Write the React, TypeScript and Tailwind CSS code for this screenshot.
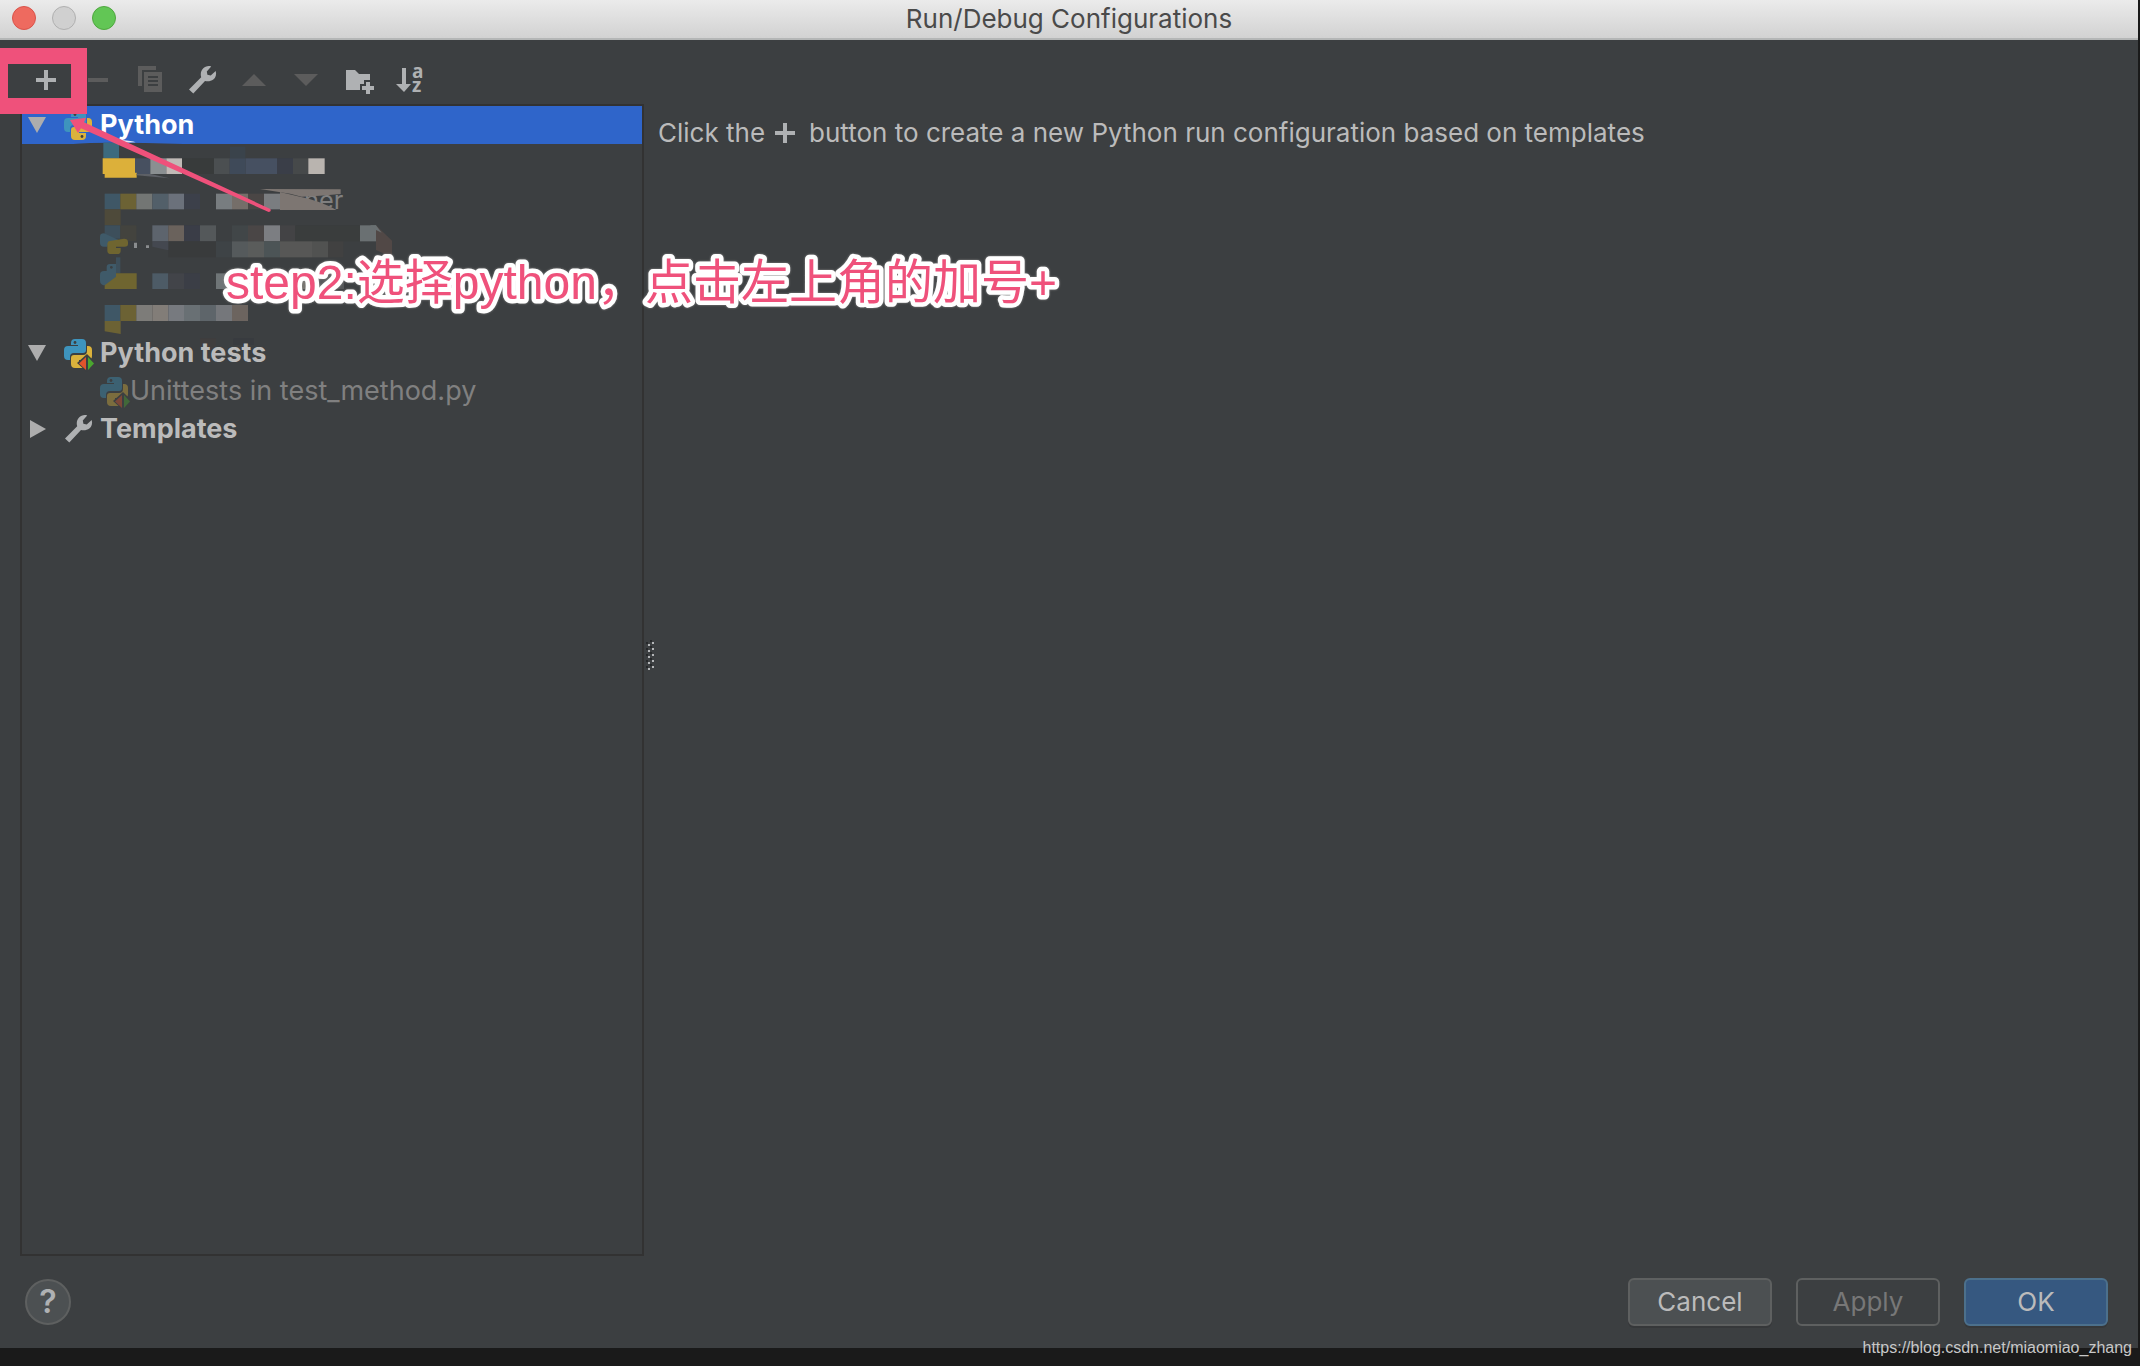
import type { ReactNode } from 'react';

type IconProps = { children: ReactNode; className?: string };

function Icon({ children, className = '' }: IconProps) {
  return (
    <svg viewBox="0 0 32 32" className={`size-8 shrink-0 overflow-visible ${className}`} aria-hidden="true">
      {children}
    </svg>
  );
}

function WrenchIcon() {
  return (
    <Icon>
      <path
        d="M3 25.4 15.2 13.2C14 8.700 15.600 4.600 19.600 2.800 21.400 2 23.500 1.900 25.200 2.500L20.800 7.400 21.400 10.800 24.700 11.600 29.700 6.900C30.700 10.300 29.800 13.500 27.300 15.500 25 17.300 21.700 17.700 19 16.900L7.300 29.600Z"
        fill="#afb1b3"
      />
    </Icon>
  );
}

function PythonIcon({ dim = false, tests = true }: { dim?: boolean; tests?: boolean }) {
  return (
    <Icon>
      <g opacity={dim ? 0.4 : 1}>
        <path
          d="M9 6Q9 2 13 2H20Q24 2 24 6V13Q24 16 21 16H12Q8 16 8 20V23H6Q2 23 2 19V13Q2 9 6 9H16V8H9Z"
          fill="#3e94bd"
        />
        <path
          d="M25 9H26Q30 9 30 13V19Q30 23 26 23H17V24H24V27Q24 31 20 31H13Q9 31 9 27V21Q9 18 12 18H21Q25 18 25 14Z"
          fill="#dbb23c"
        />
        <circle cx="13" cy="5.500" r="1.400" fill="#3c3f41" />
        {tests ? (
          <>
            <path d="M25 17 34 26 25 35 15 26Z" fill="#3c3f41" />
            <path d="M24 20V33L17 26.500Z" fill="#e0532c" />
            <path d="M26 20V33L32 26.500Z" fill="#4aa62f" />
          </>
        ) : (
          <circle cx="20" cy="27.500" r="1.400" fill="#3c3f41" />
        )}
      </g>
    </Icon>
  );
}

function ToolButton({ label, children }: { label: string; children: ReactNode }) {
  return (
    <button type="button" aria-label={label} className="flex h-12 w-[52px] items-center justify-center">
      {children}
    </button>
  );
}

function Toolbar() {
  return (
    <div className="flex h-16 items-center pt-4 pl-5">
      <ToolButton label="Add New Configuration">
        <Icon>
          <path d="M14 6h4v8h8v4h-8v8h-4v-8H6v-4h8z" fill="#afb1b3" />
        </Icon>
      </ToolButton>
      <ToolButton label="Remove Configuration">
        <Icon>
          <path d="M6 14h20v4H6z" fill="#5c5c5c" />
        </Icon>
      </ToolButton>
      <ToolButton label="Copy Configuration">
        <Icon>
          <path d="M4 2h18v4H8v16H4z" fill="#5c5c5c" />
          <path d="M10 8h18v20H10zM14 12v2h10v-2zM14 16v2h10v-2zM14 20v2h10v-2z" fill="#5c5c5c" fillRule="evenodd" />
        </Icon>
      </ToolButton>
      <ToolButton label="Edit Templates">
        <WrenchIcon />
      </ToolButton>
      <ToolButton label="Move Up">
        <Icon>
          <path d="M4 22 16 10 28 22z" fill="#5c5c5c" />
        </Icon>
      </ToolButton>
      <ToolButton label="Move Down">
        <Icon>
          <path d="M4 10h24L16 22z" fill="#5c5c5c" />
        </Icon>
      </ToolButton>
      <ToolButton label="Create New Folder">
        <Icon>
          <path d="M4 6h9l4 4h11v6h-6v4h-4v6H4z" fill="#afb1b3" />
          <path d="M24 18h4v4h4v4h-4v4h-4v-4h-4v-4h4z" fill="#afb1b3" />
        </Icon>
      </ToolButton>
      <ToolButton label="Sort Configurations">
        <Icon>
          <path d="M8 4h4v16h5l-7 8-8-8h6z" fill="#afb1b3" />
          <text x="18" y="14" fontSize="19" className="fill-[#afb1b3] font-['Open_Sans',sans-serif] font-bold">
            a
          </text>
          <text x="18" y="28" fontSize="19" className="fill-[#afb1b3] font-['Open_Sans',sans-serif] font-bold">
            z
          </text>
        </Icon>
      </ToolButton>
    </div>
  );
}

function Chevron({ open }: { open: boolean }) {
  return (
    <svg viewBox="0 0 18 18" className="size-[18px] shrink-0" aria-hidden="true">
      <path d={open ? 'M0 1H18L9 17Z' : 'M2 0 18 9 2 18Z'} fill="#adadad" />
    </svg>
  );
}

type RowProps = { label: string; open: boolean; selected?: boolean; icon: ReactNode };

function GroupRow({ label, open, selected = false, icon }: RowProps) {
  return (
    <button
      type="button"
      aria-expanded={open}
      className={`flex h-[38px] w-full items-center pl-1.5 text-left font-bold ${selected ? 'bg-[#2f65ca] text-white' : 'text-[#bbbbbb]'}`}
    >
      <Chevron open={open} />
      <span className="mr-1.5 ml-4 flex">{icon}</span>
      {label}
    </button>
  );
}

/* x, y, width, height, fill */
const mosaic: [number, number, number, number, string][] = [
  [310, 38, 47, 47, '#3c6a7e'],
  [690, 50, 46, 35, '#3a434b'],
  [405, 85, 46, 47, '#475060'],
  [451, 85, 48, 47, '#8a8f91'],
  [499, 85, 47, 47, '#c0bab6'],
  [546, 85, 96, 47, '#383b3b'],
  [642, 85, 47, 47, '#4b4f51'],
  [689, 85, 48, 47, '#3f4a59'],
  [737, 85, 94, 47, '#465061'],
  [831, 85, 48, 47, '#3a3e48'],
  [879, 85, 46, 47, '#46494a'],
  [925, 85, 49, 47, '#b9b4af'],
  [314, 191, 47, 47, '#3f5766'],
  [361, 191, 48, 47, '#6c6234'],
  [409, 191, 48, 47, '#737674'],
  [457, 191, 48, 47, '#525f69'],
  [505, 191, 47, 47, '#6b717b'],
  [552, 191, 48, 47, '#3c404a'],
  [648, 191, 48, 47, '#787d80'],
  [696, 191, 48, 47, '#756e69'],
  [744, 191, 48, 47, '#4a4645'],
  [792, 191, 48, 47, '#7a7d80'],
  [314, 238, 48, 48, '#4e4a3a'],
  [314, 286, 47, 40, '#3d4f5b'],
  [361, 286, 48, 47, '#43433e'],
  [457, 286, 48, 48, '#5d646d'],
  [505, 286, 47, 48, '#6a625c'],
  [552, 286, 48, 48, '#3a3d47'],
  [600, 286, 48, 48, '#54585a'],
  [696, 286, 48, 48, '#414648'],
  [744, 286, 48, 48, '#4a4646'],
  [792, 286, 48, 48, '#7c7e82'],
  [840, 286, 46, 48, '#434345'],
  [886, 286, 194, 48, '#3a3d3d'],
  [1080, 286, 48, 48, '#6a7072'],
  [505, 334, 143, 48, '#393b3c'],
  [648, 334, 48, 48, '#3e4346'],
  [696, 334, 48, 48, '#555a5c'],
  [744, 334, 48, 48, '#5a5c5b'],
  [792, 334, 48, 48, '#4c5456'],
  [840, 334, 96, 48, '#575756'],
  [936, 334, 48, 48, '#515251'],
  [984, 334, 46, 48, '#414141'],
  [348, 382, 13, 48, '#3d4f5b'],
  [457, 430, 48, 47, '#4d5b66'],
  [505, 430, 47, 47, '#424449'],
  [552, 430, 48, 47, '#3b3e46'],
  [648, 430, 48, 47, '#6f7577'],
  [900, 430, 36, 47, '#76746e'],
  [936, 430, 96, 47, '#55585a'],
  [314, 525, 47, 48, '#3f5766'],
  [361, 525, 48, 48, '#6c6234'],
  [409, 525, 48, 48, '#7d7c79'],
  [457, 525, 48, 48, '#827d78'],
  [505, 525, 47, 48, '#777a7f'],
  [552, 525, 48, 48, '#697074'],
  [600, 525, 48, 48, '#5e656a'],
  [648, 525, 48, 48, '#75777b'],
  [696, 525, 48, 48, '#6c645f'],
  [600, 625, 48, 35, '#403e3e'],
  [700, 625, 62, 20, '#383b3f'],
];

/* Redacted configuration names, brushed over with a mosaic. */
function RedactedRows() {
  return (
    <svg
      viewBox="66 42 1200 570"
      className="block h-[190px] w-[400px] overflow-visible"
      role="img"
      aria-label="Redacted configurations"
    >
      <path d="M220 42Q300 34 550 42Z" fill="#3c3f41" />
      <path d="M357 38 366 30Q395 32 407 37Z" fill="#e8eaf2" />
      {mosaic.map(([x, y, w, h, fill]) => (
        <rect key={`${x}-${y}`} x={x} y={y} width={w} height={h} fill={fill} />
      ))}
      <path d="M308 85H405V128H410V143H314V132H308Z" fill="#dcb03a" />
      <path d="M410 132H452L508 145 410 136Z" fill="#5d6066" />
      <text x="912" y="236" fontSize="76" className="fill-[#808080]">
        ner
      </text>
      <path d="M780 177 1022 178V192L960 197 905 200 870 191Z" fill="#7d7672" />
      <path d="M840 186 900 200Q960 212 1010 240H840Z" fill="#7d7672" />
      <path d="M1128 286 1176 332V382L1128 360Z" fill="#514846" />
      <path d="M1110 286H1128L1145 308 1128 300Z" fill="#6a7072" />
      <path d="M300 320Q300 310 312 310L356 330V338Q322 332 322 350H312Q300 350 300 338Z" fill="#3f5a69" />
      <path d="M322 342Q322 332 334 332L372 326Q384 326 384 336V342Q384 350 374 350H348V354H362V362Q362 372 352 372H334Q322 372 322 362Z" fill="#6f6530" />
      <path d="M402 338h9v16h-9zM438 346h9v8h-9z" fill="#8a8d8f" />
      <path d="M457 334H505V361L457 350Z" fill="#444850" />
      <path d="M320 412Q320 402 330 402H348V430H320ZM300 434Q300 423 312 423H348V442L318 466Q300 466 300 452Z" fill="#3f5a69" />
      <circle cx="334" cy="412" r="4" fill="#3c3f41" />
      <path d="M348 430H410V477H314V466L348 440Z" fill="#6f6530" />
      <path d="M314 573H362V612L314 604Z" fill="#6c6234" />
    </svg>
  );
}

function Tree() {
  return (
    <nav aria-label="Configurations" className="w-[624px] shrink-0 border-2 border-[#323232] text-[27px]">
      <ul>
        <li>
          <GroupRow label="Python" open selected icon={<PythonIcon tests={false} />} />
          <RedactedRows />
        </li>
        <li>
          <GroupRow label="Python tests" open icon={<PythonIcon />} />
          <button type="button" className="flex h-[38px] w-full items-center pl-[76px] text-left text-[#808080]">
            <PythonIcon dim />
            Unittests in test_method.py
          </button>
        </li>
        <li>
          <GroupRow label="Templates" open={false} icon={<WrenchIcon />} />
        </li>
      </ul>
    </nav>
  );
}

function SplitterGrip() {
  return (
    <svg viewBox="0 0 8 30" className="mb-[50px] ml-0.5 h-[30px] w-2 shrink-0 self-center" aria-hidden="true">
      {[0, 6, 12, 18, 24].map((y) => (
        <g key={y}>
          <path d={`M0 ${y + 2}h2v2h-2zM4 ${y}h2v2h-2z`} fill="#26282a" />
          <path d={`M6 ${y + 2}h2v2h-2zM2 ${y + 4}h2v2h-2z`} fill="#b4b6b8" />
        </g>
      ))}
    </svg>
  );
}

function Annotations() {
  return (
    <div className="pointer-events-none absolute top-0 left-0">
      <div className="absolute top-12 left-0 h-[66px] w-[87px] border-16 border-l-8 border-[#ef517b]" />
      <svg viewBox="0 0 900 660" className="absolute top-0 left-0 h-[220px] w-[300px]" aria-hidden="true">
        <path d="M210 360 258 353 252 367 811 627Q815 635 806 636L243 385 234 399Z" fill="#ef517b" />
      </svg>
      <svg className="absolute top-60 left-[220px] h-20 w-[860px] drop-shadow-[0_0_1px_#888888]">
        <text
          x="6"
          y="59"
          strokeLinejoin="round"
          className="fill-[#ef517b] stroke-white stroke-[9px] font-['Liberation_Sans','Noto_Sans_CJK_SC',sans-serif] text-5xl [paint-order:stroke]"
        >
          step2:选择python，点击左上角的加号+
        </text>
      </svg>
    </div>
  );
}

export default function App() {
  return (
    <div className="relative flex min-h-screen flex-col bg-[#1a1a1a] pr-0.5 pb-[18px] font-[Inter,sans-serif] text-[26px] leading-8">
      <main className="flex flex-1 flex-col bg-[#3c3f41]">
        <header className="relative flex h-10 items-center justify-center border-b-2 border-[#b4b6b6] bg-linear-to-b from-[#ebebeb] to-[#d2d2d2]">
          <div className="absolute top-1.5 left-3 flex gap-4">
            <button type="button" aria-label="Close" className="size-6 rounded-full border border-[#d9534a] bg-[#ee6a5f]" />
            <button type="button" aria-label="Minimize" className="size-6 rounded-full border border-[#b0b0b0] bg-[#d0d0d0]" />
            <button type="button" aria-label="Zoom" className="size-6 rounded-full border border-[#4fa73f] bg-[#62c655]" />
          </div>
          <h1 className="text-[#4a4a4a]">Run/Debug Configurations</h1>
        </header>

        <Toolbar />

        <div className="flex flex-1 pl-5">
          <Tree />
          <SplitterGrip />
          <p className="flex h-14 items-center pt-0.5 pl-1 text-[#bbbbbb]">
            Click the
            <Icon className="mr-2 ml-1">
              <path d="M14 6h4v8h8v4h-8v8h-4v-8H6v-4h8z" fill="#afb1b3" />
            </Icon>
            button to create a new Python run configuration based on templates
          </p>
        </div>

        <footer className="flex h-[92px] items-center gap-6 pr-[30px] pl-[25px]">
          <button
            type="button"
            aria-label="Help"
            className="mr-auto flex size-[46px] items-center justify-center rounded-full border-2 border-[#5e6060] bg-[#4c5052] text-[32px] font-semibold text-[#afb1b3]"
          >
            ?
          </button>
          <button type="button" className="h-12 w-36 rounded-md border-2 border-[#5e6060] bg-[#4c5052] text-[#bbbbbb] shadow-[0_2px_0_#36383a]">
            Cancel
          </button>
          <button type="button" disabled className="h-12 w-36 rounded-md border-2 border-[#5e6060] text-[#777777]">
            Apply
          </button>
          <button type="button" className="h-12 w-36 rounded-md border-2 border-[#4c708c] bg-[#365880] text-[#bbbbbb] shadow-[0_2px_0_#36383a]">
            OK
          </button>
        </footer>
      </main>

      <Annotations />
      <a
        href="https://blog.csdn.net/miaomiao_zhang"
        className="absolute right-2 bottom-2 font-['Liberation_Sans',sans-serif] text-base leading-5 text-[#c8c8c8]"
      >
        https://blog.csdn.net/miaomiao_zhang
      </a>
    </div>
  );
}
